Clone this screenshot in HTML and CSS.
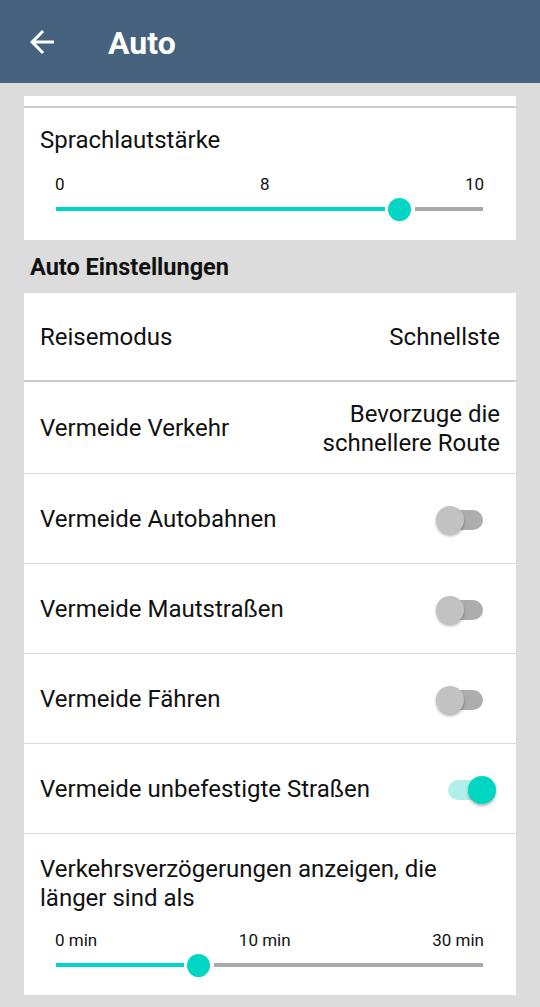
FILE: index.html
```html
<!DOCTYPE html>
<html lang="de">
<head>
    <meta charset="UTF-8">
    <title>Auto</title>
    <link rel="stylesheet" href="styles.css">
</head>
<body>
    <div class="topbar">
        <div class="back">
            <svg width="36" height="36" viewBox="0 0 24 24"><path d="M20 11H7.83l5.59-5.59L12 4l-8 8 8 8 1.41-1.41L7.83 13H20v-2z" fill="#fff"/></svg>
        </div>
        <div class="title">Auto</div>
    </div>

    <div class="content">
        <div class="card">
            <div class="peek"></div>
            <div class="block">
                <div class="label">Sprachlautstärke</div>
                <div class="ticks"><span>0</span><span>8</span><span>10</span></div>
                <div class="slider">
                    <div class="fill" style="width: calc(80% - 13px)"></div>
                    <div class="knob"></div>
                    <div class="rest"></div>
                </div>
            </div>
        </div>

        <div class="section">Auto Einstellungen</div>

        <div class="card">
            <div class="row first">
                <div class="label">Reisemodus</div>
                <div class="value">Schnellste</div>
            </div>
            <div class="row tall">
                <div class="label">Vermeide Verkehr</div>
                <div class="value">Bevorzuge die<br>schnellere Route</div>
            </div>
            <div class="row">
                <div class="label">Vermeide Autobahnen</div>
                <div class="switch"><div class="track"></div><div class="thumb"></div></div>
            </div>
            <div class="row">
                <div class="label">Vermeide Mautstraßen</div>
                <div class="switch"><div class="track"></div><div class="thumb"></div></div>
            </div>
            <div class="row">
                <div class="label">Vermeide Fähren</div>
                <div class="switch"><div class="track"></div><div class="thumb"></div></div>
            </div>
            <div class="row">
                <div class="label">Vermeide unbefestigte Straßen</div>
                <div class="switch on"><div class="track"></div><div class="thumb"></div></div>
            </div>
            <div class="block last">
                <div class="label">Verkehrsverzögerungen anzeigen, die<br>länger sind als</div>
                <div class="ticks"><span>0 min</span><span>10 min</span><span>30 min</span></div>
                <div class="slider">
                    <div class="fill" style="width: calc(33.3% - 14px)"></div>
                    <div class="knob"></div>
                    <div class="rest"></div>
                </div>
            </div>
        </div>
    </div>
</body>
</html>
```

FILE: styles.css
```css
/* Auto settings screen */
body{margin:0; background:#dcdcdc; font-family: Roboto, "Noto Sans", sans-serif; color:#111;}

.topbar{height:83px; background:#47627e; display:flex; align-items:center; color:#fff;}
.back{width:36px; height:36px; margin-left:24px;}
.back svg{display:block;}
.title{margin-left:48px; padding-top:2px; font-size:32px; font-weight:bold;}

.content{padding:13px 24px 0;}
.card{background:#fff;}
.peek{height:10px; border-bottom:2px solid #cacaca;}

.label{font-size:24px; line-height:29px;}
.value{font-size:24px; line-height:29px; text-align:right;}

.block{padding:18px 16px 19px;}
.block.last{padding-top:21px; padding-bottom:18px;}
.ticks{display:flex; justify-content:space-between; font-size:17px; line-height:20px; margin:19px 16px 0 15px;}
.block.last .ticks{margin-top:17px;}
.slider{display:flex; align-items:center; height:24px; margin:3px 17px 0 16px;}
.fill{height:4px; background:#00d6c3;}
.knob{width:23px; height:23px; border-radius:50%; background:#00d6c3; margin:0 4px 0 3px; flex:none;}
.rest{flex:1; height:4px; background:#a9a9a9;}

.section{height:53px; display:flex; align-items:center; padding:1px 0 0 6px; box-sizing:border-box; font-size:23.5px; font-weight:bold;}

.row{display:flex; align-items:center; justify-content:space-between; min-height:87px; padding:2px 16px 0; border-bottom:1px solid #dadada;}
.row.first{min-height:85px; border-bottom:2px solid #c9c9c9;}
.row.tall{min-height:89px;}

.switch{position:relative; width:60px; height:28px; margin-right:4px;}
.track{margin:4px 13px 0 12px; height:20px; border-radius:10px; background:#adadad;}
.thumb{position:absolute; left:0; top:0; width:28px; height:28px; border-radius:50%; background:#c2c2c2; box-shadow:0 2px 3px rgba(0,0,0,0.3);}
.switch.on .track{background:#b2efe9;}
.switch.on .thumb{left:auto; right:0; background:#00d6c3;}
```
